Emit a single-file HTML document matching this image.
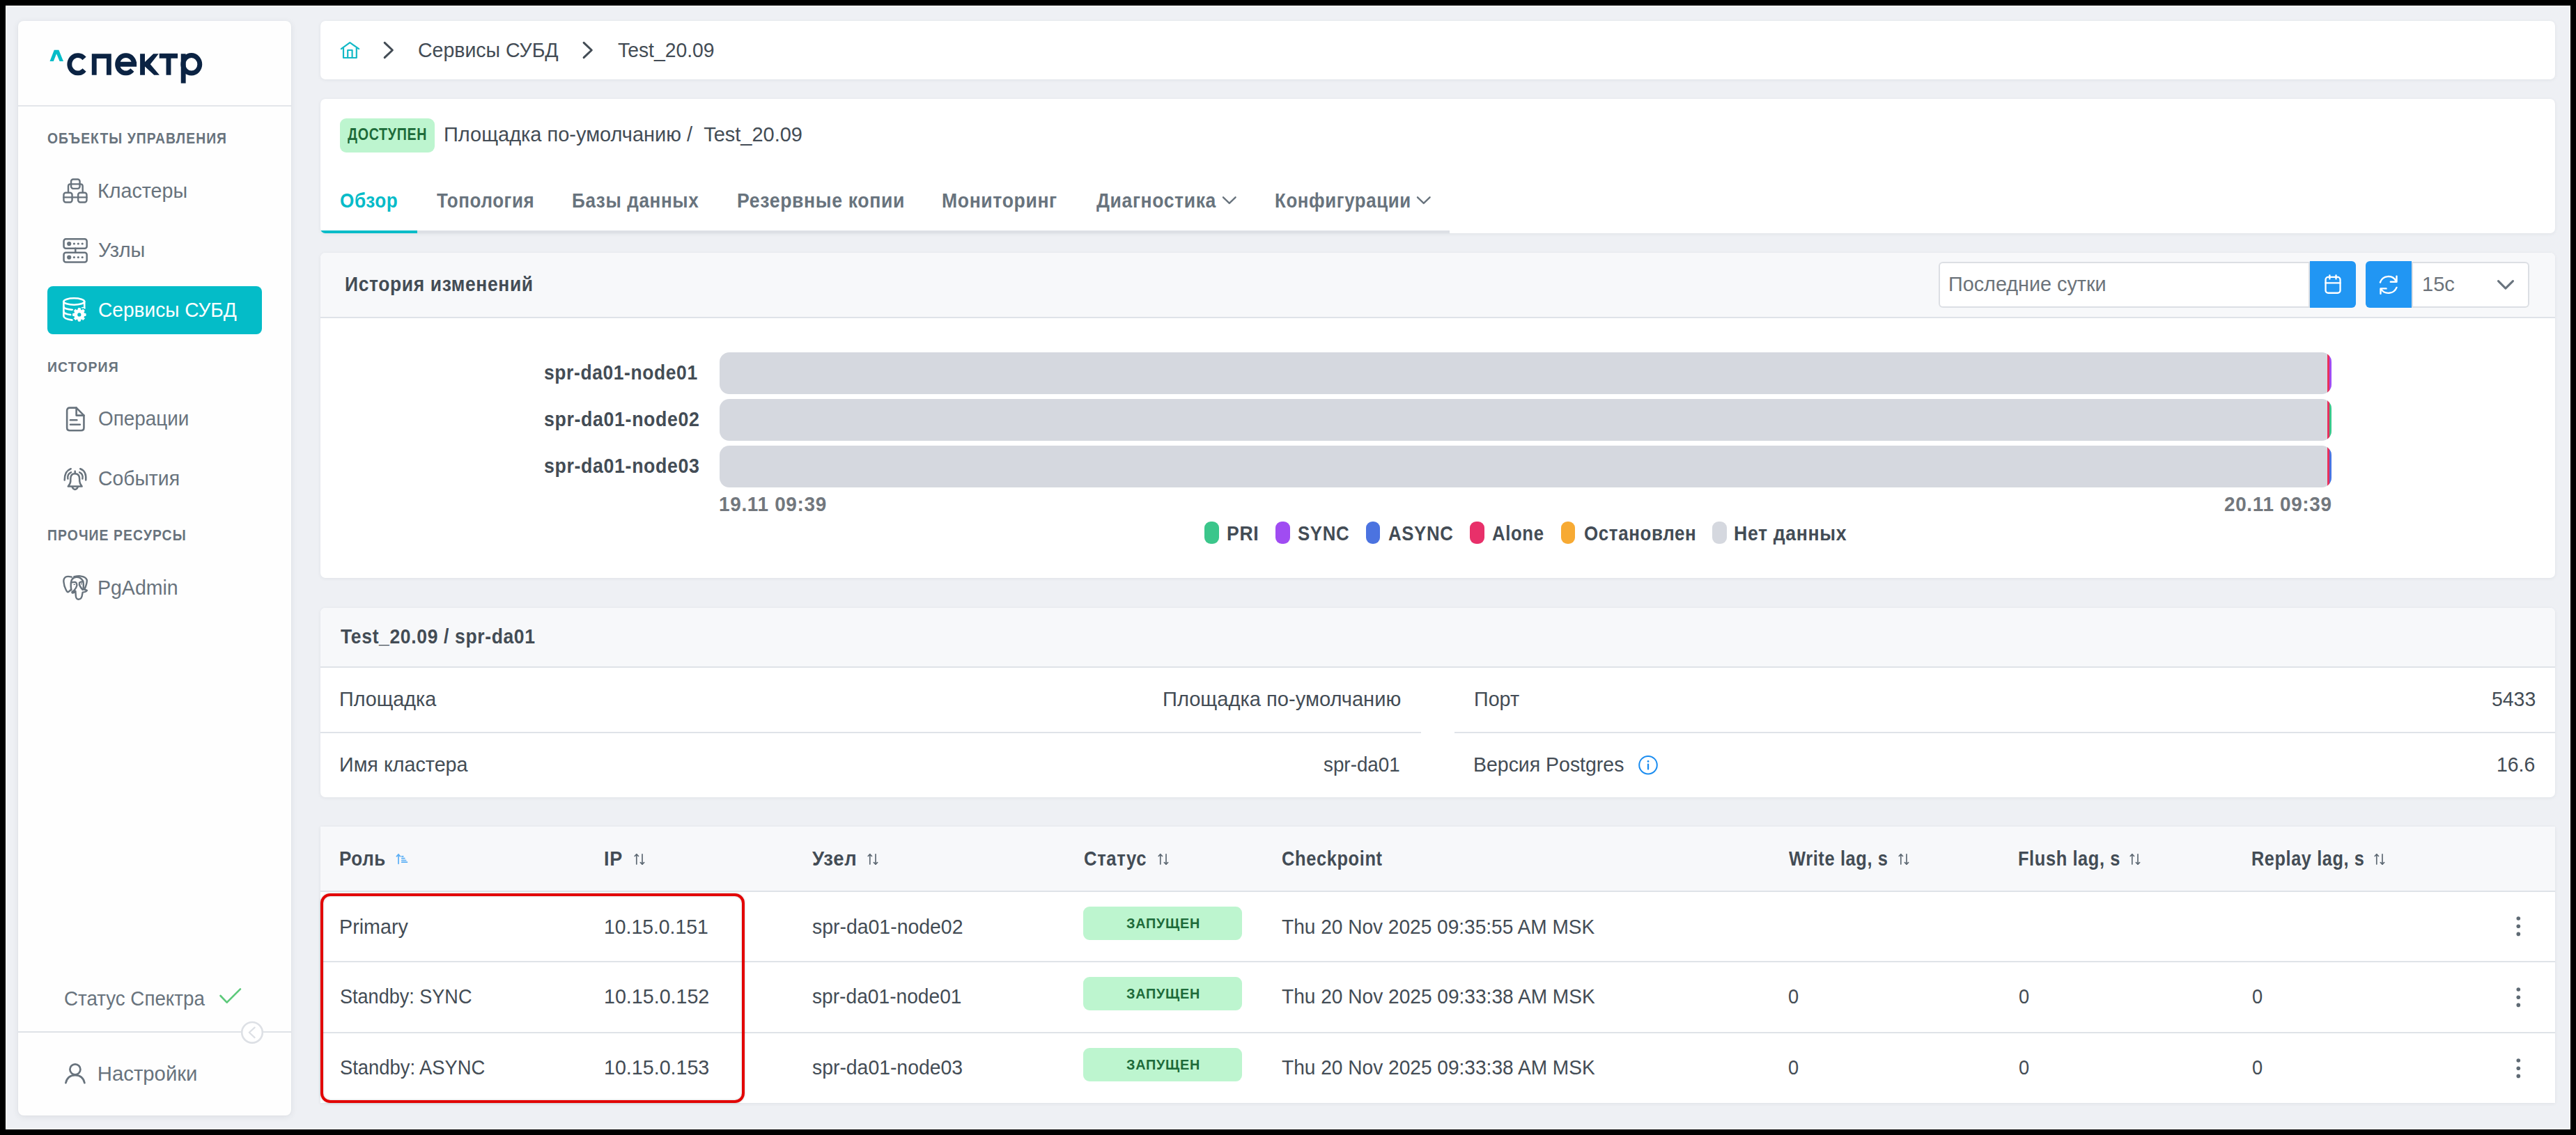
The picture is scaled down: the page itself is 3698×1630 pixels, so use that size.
<!DOCTYPE html>
<html><head><meta charset="utf-8"><title>Test_20.09</title>
<style>
html,body{margin:0;padding:0}
body{width:3698px;height:1630px;background:#000;position:relative;overflow:hidden;font-family:"Liberation Sans",sans-serif}
.a{position:absolute}
svg.a{overflow:visible}
.tx{white-space:nowrap;line-height:1;transform-origin:0 0}
</style></head><body>
<div class="a" style="left:8px;top:8px;width:3682px;height:1614px;background:#eef0f4;box-shadow:inset 0 0 0 1px #fbfcfd;"></div>
<div class="a" style="left:26px;top:30px;width:392px;height:1572px;border-radius:8px;background:#fefefe;box-shadow:0 2px 10px rgba(40,50,70,.09),0 0 2px rgba(40,50,70,.05);"></div>
<div class="a" style="left:26px;top:151px;width:392px;height:2px;background:#e3e6ea;"></div>
<svg class="a" style="left:60px;top:60px;" width="40" height="40" viewBox="0 0 40 40"><polygon fill="#04bcc8" points="17.8,11.7 24.4,11.7 31,27.9 25.6,27.9 21.1,17.3 16.8,27.9 11.5,27.9"/></svg>
<svg class="a" style="left:0;top:0" width="320" height="140" viewBox="0 0 320 140"><defs><clipPath id="lc"><rect x="90" y="76.2" width="210" height="32.3"/><rect x="255" y="90" width="15" height="29.7"/></clipPath></defs><path d="M121.04,84.10 L120.21,83.15 L119.29,82.30 L118.30,81.55 L117.24,80.91 L116.12,80.38 L114.96,79.98 L113.76,79.71 L112.55,79.57 L111.33,79.56 L110.11,79.68 L108.91,79.94 L107.75,80.32 L106.62,80.82 L105.55,81.45 L104.54,82.18 L103.62,83.03 L102.77,83.96 L102.02,84.99 L101.37,86.09 L100.83,87.25 L100.41,88.47 L100.10,89.72 L99.91,91.00 L99.85,92.30 L99.91,93.60 L100.10,94.88 L100.41,96.13 L100.83,97.35 L101.37,98.51 L102.02,99.61 L102.77,100.64 L103.62,101.57 L104.54,102.42 L105.55,103.15 L106.62,103.78 L107.75,104.28 L108.91,104.66 L110.11,104.92 L111.33,105.04 L112.55,105.03 L113.76,104.89 L114.96,104.62 L116.12,104.22 L117.24,103.69 L118.30,103.05 L119.29,102.30 L120.21,101.45 L121.04,100.50 M192.65,92.30 L192.57,90.82 L192.33,89.36 L191.93,87.94 L191.37,86.58 L190.68,85.29 L189.84,84.10 L188.88,83.03 L187.82,82.07 L186.65,81.26 L185.40,80.59 L184.09,80.09 L182.73,79.74 L181.35,79.57 L179.95,79.57 L178.57,79.74 L177.21,80.09 L175.90,80.59 L174.65,81.26 L173.48,82.07 L172.42,83.03 L171.46,84.10 L170.62,85.29 L169.93,86.58 L169.37,87.94 L168.97,89.36 L168.73,90.82 L168.65,92.30 L168.73,93.78 L168.97,95.24 L169.37,96.66 L169.93,98.02 L170.62,99.31 L171.46,100.50 L172.42,101.57 L173.48,102.53 L174.65,103.34 L175.90,104.01 L177.21,104.51 L178.57,104.86 L179.95,105.03 L181.35,105.03 L182.73,104.86 L184.09,104.51 L185.40,104.01 L186.65,103.34 L187.82,102.53 L188.88,101.57 L189.84,100.50 M168.65,92.30 H196.10 M135.25,107.7 V80.65 H156.35 V107.7 M228.7,80.25 H255.1 M242,80 V107.7 M263.2,77.2 V119.7" fill="none" stroke="#0b2343" stroke-width="6.90" stroke-linejoin="miter" clip-path="url(#lc)"/><ellipse cx="274.8" cy="92.30" rx="12.00" ry="12.75" fill="none" stroke="#0b2343" stroke-width="6.90"/><polygon fill="#0b2343" points="201.1,77.2 208,77.2 208,89 220.2,77.2 227.7,77.2 215.8,92.3 228.9,107.7 221.2,107.7 208,95.5 208,107.7 201.1,107.7"/></svg>
<div class="a" style="left:68px;top:411px;width:308px;height:69px;background:#04bcc8;border-radius:8px;"></div>
<div class="a" style="left:26px;top:1481px;width:392px;height:2px;background:#dfe2e7;"></div>
<svg class="a" style="left:340px;top:1461px;" width="44" height="44" viewBox="0 0 44 44"><circle cx="22" cy="21.8" r="14.8" fill="#fff" stroke="#dde0e5" stroke-width="2.6"/><polyline points="25.6,14.6 17.8,21.8 25.6,29.1" fill="none" stroke="#dde0e5" stroke-width="2.2" stroke-linecap="round" stroke-linejoin="round"/></svg>
<svg class="a" style="left:300px;top:1400px;" width="60" height="60" viewBox="0 0 60 60"><polyline points="16.5,30 25.7,39.7 45,20.3" fill="none" stroke="#5cc97a" stroke-width="2.6" stroke-linecap="round" stroke-linejoin="round"/></svg>
<svg class="a" style="left:84px;top:250px;" width="48" height="48" viewBox="0 0 48 48"><g fill="none" stroke="#68737d" stroke-width="2.4" stroke-linecap="round" stroke-linejoin="round"><rect x="18.05" y="7.45" width="12.5" height="13.4" rx="3"/><line x1="18" y1="14.4" x2="30.5" y2="14.4"/><path d="M18,14.4 H17 Q14,14.4 14,17.5 V25.6"/><path d="M30.5,14.4 H31.6 Q34.7,14.4 34.7,17.5 V25.6"/><rect x="7.45" y="26.75" width="12.1" height="13.7" rx="3"/><rect x="28.15" y="26.75" width="12.3" height="13.7" rx="3"/><line x1="7.45" y1="33.4" x2="40.45" y2="33.4"/></g></svg>
<svg class="a" style="left:84px;top:335px;" width="48" height="48" viewBox="0 0 48 48"><g fill="none" stroke="#68737d" stroke-width="2.5" stroke-linecap="round" stroke-linejoin="round"><rect x="7.55" y="8.25" width="33.1" height="13.5" rx="3"/><rect x="7.55" y="27.65" width="33.1" height="13.8" rx="3"/><line x1="24.3" y1="21.8" x2="24.3" y2="27.6"/></g><g fill="#68737d"><circle cx="15.2" cy="15" r="3.1"/><circle cx="22.4" cy="15" r="1.6"/><circle cx="28.3" cy="15" r="1.6"/><circle cx="34.2" cy="15" r="1.6"/><circle cx="15.2" cy="34.5" r="3.1"/><circle cx="22.4" cy="34.5" r="1.6"/><circle cx="28.3" cy="34.5" r="1.6"/><circle cx="34.2" cy="34.5" r="1.6"/></g></svg>
<svg class="a" style="left:84px;top:420px;" width="48" height="48" viewBox="0 0 48 48"><g fill="none" stroke="#fff" stroke-width="2.6" stroke-linecap="round" stroke-linejoin="round"><ellipse cx="22.3" cy="13" rx="14.9" ry="4.7"/><path d="M7.4,13 V34 Q7.4,38 19.5,39.6"/><path d="M37.2,13 V22.5"/><path d="M7.4,20.5 Q8,24 20.3,25"/><path d="M7.4,27.5 Q8,31 17.6,32"/><path d="M33,22.5 Q36,22 37.2,22.5"/></g><polygon fill="#04bcc8" points="27.94,24.95 28.33,22.62 31.27,22.62 31.66,24.95 33.40,25.66 35.33,24.30 37.40,26.37 36.04,28.30 36.75,30.04 39.08,30.43 39.08,33.37 36.75,33.76 36.04,35.50 37.40,37.43 35.33,39.50 33.40,38.14 31.66,38.85 31.27,41.18 28.33,41.18 27.94,38.85 26.20,38.14 24.27,39.50 22.20,37.43 23.56,35.50 22.85,33.76 20.52,33.37 20.52,30.43 22.85,30.04 23.56,28.30 22.20,26.37 24.27,24.30 26.20,25.66" stroke="#04bcc8" stroke-width="4" stroke-linejoin="round"/><polygon fill="#fff" points="27.94,24.95 28.33,22.62 31.27,22.62 31.66,24.95 33.40,25.66 35.33,24.30 37.40,26.37 36.04,28.30 36.75,30.04 39.08,30.43 39.08,33.37 36.75,33.76 36.04,35.50 37.40,37.43 35.33,39.50 33.40,38.14 31.66,38.85 31.27,41.18 28.33,41.18 27.94,38.85 26.20,38.14 24.27,39.50 22.20,37.43 23.56,35.50 22.85,33.76 20.52,33.37 20.52,30.43 22.85,30.04 23.56,28.30 22.20,26.37 24.27,24.30 26.20,25.66" stroke="#fff" stroke-width="1" stroke-linejoin="round"/><circle cx="29.8" cy="31.9" r="2.6" fill="#04bcc8"/></svg>
<svg class="a" style="left:84px;top:578px;" width="48" height="48" viewBox="0 0 48 48"><g fill="none" stroke="#68737d" stroke-width="2.6" stroke-linecap="round" stroke-linejoin="round"><path d="M25.6,7.65 H16.2 Q12.15,7.65 12.15,11.7 V36.2 Q12.15,40.25 16.2,40.25 H32.4 Q36.45,40.25 36.45,36.2 V18.6 Z"/><path d="M25.6,7.65 V18.6 H36.45"/><line x1="17" y1="25.2" x2="26.3" y2="25.2"/><line x1="17" y1="31.7" x2="30.8" y2="31.7"/></g></svg>
<svg class="a" style="left:84px;top:664px;" width="48" height="48" viewBox="0 0 48 48"><g fill="none" stroke="#68737d" stroke-width="2.5" stroke-linecap="round" stroke-linejoin="round"><path d="M23.7,12.8 V15.8"/><path d="M23.7,16.2 Q17.2,16.2 17.3,24 V27 Q17.2,30.5 13.8,34.6 H33.6 Q30.3,30.5 30.2,27 V24 Q30.2,16.2 23.7,16.2 Z"/><path d="M19.6,35.3 Q21.2,38.9 23.7,38.9 Q26.2,38.9 27.8,35.3"/><path d="M17.7,9.2 Q8.5,12.5 8.7,25.4"/><path d="M18,14.3 Q12.2,16.8 13.4,23.6"/><path d="M31.2,9.2 Q40.4,12.5 39.2,25.4"/><path d="M30.2,14.3 Q35.8,16.8 34.4,23.6"/></g></svg>
<svg class="a" style="left:84px;top:820px;" width="48" height="48" viewBox="0 0 48 48"><g fill="none" stroke="#68737d" stroke-width="2.4" stroke-linecap="round" stroke-linejoin="round"><path d="M18.8,8.6 Q13,7.2 10.5,8.5 Q7,10.5 7.4,15.5 Q8,22 10.5,26.5 Q12.3,30.5 13.5,30.4 Q15.5,29.5 18.3,26.4"/><path d="M18.2,27.3 Q17.5,21 17.8,17 Q18.5,9.6 25.3,8.7 Q32,8.4 35.3,14.6 Q36.3,18 35.5,26.5"/><path d="M22.3,8.2 Q29,6.8 33,7.6 Q39,8.6 40.8,13 Q41,18 37.2,26.8 Q40,27.3 40.9,28 Q39.5,30.3 34.7,30.6 L34,34 Q33.6,40.5 28.4,40.8 Q25.1,40.5 24.8,35.5 L24.4,29 Q23,31.5 19.8,31.5 Q18.5,30 21.2,28.8 L23.5,28.2"/><path d="M18.3,16.6 Q21,16 23.4,15.9 Q26.3,16.3 26.4,21 Q25.5,24.5 22.2,28"/><path d="M34.8,15.6 Q31.5,15.3 30,16.8 Q29.3,19.5 31,22 Q33.2,25.5 34.6,26.9"/></g><ellipse cx="22.8" cy="19.4" rx="1.4" ry="0.7" fill="#68737d"/><ellipse cx="33" cy="18.6" rx="1" ry="1" fill="#68737d"/></svg>
<svg class="a" style="left:84px;top:1518px;" width="48" height="48" viewBox="0 0 48 48"><g fill="none" stroke="#68737d" stroke-width="2.7" stroke-linecap="round" stroke-linejoin="round"><circle cx="23.9" cy="17.8" r="7.5"/><path d="M10.4,37.2 Q13,26.2 23.9,26.2 Q34.8,26.2 37.4,37.2"/></g></svg>
<div class="a" style="left:460px;top:30px;width:3208px;height:84px;background:#fff;border-radius:7px;box-shadow:0 1px 5px rgba(40,50,70,.07),0 0 1px rgba(40,50,70,.05);"></div>
<svg class="a" style="left:480px;top:50px;" width="40" height="44" viewBox="0 0 40 44"><g fill="none" stroke="#13b9c6" stroke-width="2.2" stroke-linecap="round" stroke-linejoin="round"><polyline points="9.9,20.2 22.3,11.2 35.1,20.2"/><polyline points="13,19 13,33 31.8,33 31.8,19"/><polyline points="19.2,33 19.2,22 25.6,22 25.6,33"/></g></svg>
<svg class="a" style="left:540px;top:50px;" width="30" height="44" viewBox="0 0 30 44"><polyline points="12.2,11.4 23.4,22 12.2,32.6" fill="none" stroke="#434c55" stroke-width="3.0" stroke-linecap="round" stroke-linejoin="round"/></svg>
<svg class="a" style="left:826px;top:50px;" width="30" height="44" viewBox="0 0 30 44"><polyline points="12.1,11.4 23.3,22 12.1,32.6" fill="none" stroke="#434c55" stroke-width="3.0" stroke-linecap="round" stroke-linejoin="round"/></svg>
<div class="a" style="left:460px;top:142px;width:3208px;height:193px;background:#fff;border-radius:7px;box-shadow:0 1px 5px rgba(40,50,70,.07),0 0 1px rgba(40,50,70,.05);overflow:hidden">
<div class="a" style="left:0;top:189px;width:1621px;height:4px;background:#dde0e5"></div>
<div class="a" style="left:0;top:189px;width:139px;height:4px;background:#04bcc8"></div>
</div>
<div class="a" style="left:488px;top:170px;width:136px;height:48.5px;background:#bdf5cf;border-radius:9px;"></div>
<svg class="a" style="left:1740px;top:270px;" width="40" height="40" viewBox="0 0 40 40"><polyline points="16,13.3 24.8,21.9 33.6,13.3" fill="none" stroke="#68737d" stroke-width="2.4" stroke-linecap="round" stroke-linejoin="round"/></svg>
<svg class="a" style="left:2018.7px;top:270px;" width="40" height="40" viewBox="0 0 40 40"><polyline points="16,13.3 24.8,21.9 33.6,13.3" fill="none" stroke="#68737d" stroke-width="2.4" stroke-linecap="round" stroke-linejoin="round"/></svg>
<div class="a" style="left:460px;top:363px;width:3208px;height:467px;background:#fff;border-radius:7px;box-shadow:0 1px 5px rgba(40,50,70,.07),0 0 1px rgba(40,50,70,.05);overflow:hidden">
<div class="a" style="left:0;top:0;width:3208px;height:92px;background:#f7f8fa;border-bottom:2px solid #dfe3e8"></div>
</div>
<div class="a" style="left:2782.5px;top:375.5px;width:533.5px;height:66.5px;box-sizing:border-box;background:#fff;border:2px solid #dcdfe4;border-radius:6px 0 0 6px;"></div>
<div class="a" style="left:3316px;top:375px;width:66px;height:67px;background:#2196f3;border-radius:0 6px 6px 0;"></div>
<div class="a" style="left:3396px;top:375px;width:66px;height:67px;background:#2196f3;border-radius:6px 0 0 6px;"></div>
<div class="a" style="left:3462px;top:375.5px;width:169px;height:66.5px;box-sizing:border-box;background:#fff;border:2px solid #dcdfe4;border-radius:0 6px 6px 0;"></div>
<svg class="a" style="left:3320px;top:380px;" width="60" height="60" viewBox="0 0 60 60"><g fill="none" stroke="#fff" stroke-width="2.3" stroke-linecap="round" stroke-linejoin="round"><rect x="18.55" y="17.95" width="21" height="22.8" rx="3.6"/><line x1="18.55" y1="26.4" x2="39.55" y2="26.4"/><line x1="24.4" y1="15.4" x2="24.4" y2="20.6"/><line x1="33.5" y1="15.4" x2="33.5" y2="20.6"/></g></svg>
<svg class="a" style="left:3400px;top:380px;" width="70" height="60" viewBox="0 0 70 60"><g fill="none" stroke="#fff" stroke-width="2.4" stroke-linecap="round" stroke-linejoin="round"><path d="M16.9,25.5 A12.4,12.4 0 0 1 39.6,23.6"/><polyline points="31.8,24.8 40.5,24.8 40.5,16.6"/><path d="M40.5,32.9 A12.8,12.8 0 0 1 18,35.2"/><polyline points="25.6,34.4 17.5,34.4 17.5,41.8"/></g></svg>
<svg class="a" style="left:3570px;top:390px;" width="50" height="40" viewBox="0 0 50 40"><polyline points="16.5,13.6 26.9,24.1 37.5,13.6" fill="none" stroke="#68737d" stroke-width="3.0" stroke-linecap="round" stroke-linejoin="round"/></svg>
<div class="a" style="left:1033px;top:506px;width:2314px;height:59.5px;border-radius:14px;overflow:hidden;background:#d5d8df"><div class="a" style="left:2308px;top:0;width:2.6px;height:60px;background:#e8305e"></div><div class="a" style="left:2310.5px;top:0;width:4.5px;height:60px;background:#a04cf2"></div></div>
<div class="a" style="left:1033px;top:573.3px;width:2314px;height:59.5px;border-radius:14px;overflow:hidden;background:#d5d8df"><div class="a" style="left:2308px;top:0;width:2.6px;height:60px;background:#e8305e"></div><div class="a" style="left:2310.5px;top:0;width:4.5px;height:60px;background:#3bc68b"></div></div>
<div class="a" style="left:1033px;top:640.3px;width:2314px;height:59.5px;border-radius:14px;overflow:hidden;background:#d5d8df"><div class="a" style="left:2308px;top:0;width:2.6px;height:60px;background:#e8305e"></div><div class="a" style="left:2310.5px;top:0;width:4.5px;height:60px;background:#4b73e0"></div></div>
<div class="a" style="left:1729px;top:749.4px;width:20.6px;height:32px;background:#3bc68b;border-radius:9px;"></div>
<div class="a" style="left:1831px;top:749.4px;width:20.6px;height:32px;background:#a04cf2;border-radius:9px;"></div>
<div class="a" style="left:1960.9px;top:749.4px;width:20.6px;height:32px;background:#4b73e0;border-radius:9px;"></div>
<div class="a" style="left:2110.3px;top:749.4px;width:20.6px;height:32px;background:#e8306a;border-radius:9px;"></div>
<div class="a" style="left:2240.8px;top:749.4px;width:20.6px;height:32px;background:#f7aa33;border-radius:9px;"></div>
<div class="a" style="left:2458.2px;top:749.4px;width:20.6px;height:32px;background:#d5d8df;border-radius:9px;"></div>
<div class="a" style="left:460px;top:873px;width:3208px;height:272px;background:#fff;border-radius:7px;box-shadow:0 1px 5px rgba(40,50,70,.07),0 0 1px rgba(40,50,70,.05);overflow:hidden">
<div class="a" style="left:0;top:0;width:3208px;height:84px;background:#f7f8fa;border-bottom:2px solid #dfe3e8"></div>
<div class="a" style="left:0;top:178px;width:1580px;height:2px;background:#dfe3e8"></div>
<div class="a" style="left:1628px;top:178px;width:1580px;height:2px;background:#dfe3e8"></div>
</div>
<svg class="a" style="left:2344px;top:1078px;" width="44" height="42" viewBox="0 0 44 42"><circle cx="22" cy="20.7" r="12.8" fill="none" stroke="#1a8cf0" stroke-width="2"/><circle cx="22" cy="15.4" r="1.4" fill="#1a8cf0"/><line x1="22" y1="19.6" x2="22" y2="26.6" stroke="#1a8cf0" stroke-width="2.3" stroke-linecap="round"/></svg>
<div class="a" style="left:460px;top:1187px;width:3208px;height:397px;background:#fff;border-radius:7px;box-shadow:0 1px 5px rgba(40,50,70,.07),0 0 1px rgba(40,50,70,.05);overflow:hidden;border-radius:0">
<div class="a" style="left:0;top:0;width:3208px;height:92px;background:#f7f8fa;border-bottom:2px solid #dfe3e8"></div>
<div class="a" style="left:0;top:193px;width:3208px;height:2px;background:#dfe3e8"></div>
<div class="a" style="left:0;top:295px;width:3208px;height:2px;background:#dfe3e8"></div>
</div>
<svg class="a" style="left:560px;top:1216px;" width="40" height="34" viewBox="0 0 40 34"><g fill="none" stroke="#5aaef5" stroke-width="1.7" stroke-linecap="round" stroke-linejoin="round"><polyline points="9.4,13.8 12,11.2 14.6,13.8"/><line x1="12" y1="11.2" x2="12" y2="24.3"/><line x1="16.8" y1="13.8" x2="18.8" y2="13.8"/><line x1="16.8" y1="16.6" x2="20.8" y2="16.6"/><line x1="16.8" y1="19.5" x2="22.6" y2="19.5"/><line x1="16.8" y1="22.2" x2="24.4" y2="22.2"/></g></svg>
<svg class="a" style="left:900px;top:1216px;" width="40" height="34" viewBox="0 0 40 34"><g fill="none" stroke="#5f6a74" stroke-width="1.7" stroke-linecap="round" stroke-linejoin="round"><polyline points="11.2,13.5 13.8,10.8 16.5,13.5"/><line x1="13.8" y1="10.8" x2="13.8" y2="25"/><polyline points="19.4,22.6 22,25.2 24.6,22.6"/><line x1="22" y1="10.8" x2="22" y2="25.2"/></g></svg>
<svg class="a" style="left:1234.5px;top:1216px;" width="40" height="34" viewBox="0 0 40 34"><g fill="none" stroke="#5f6a74" stroke-width="1.7" stroke-linecap="round" stroke-linejoin="round"><polyline points="11.2,13.5 13.8,10.8 16.5,13.5"/><line x1="13.8" y1="10.8" x2="13.8" y2="25"/><polyline points="19.4,22.6 22,25.2 24.6,22.6"/><line x1="22" y1="10.8" x2="22" y2="25.2"/></g></svg>
<svg class="a" style="left:1651.5px;top:1216px;" width="40" height="34" viewBox="0 0 40 34"><g fill="none" stroke="#5f6a74" stroke-width="1.7" stroke-linecap="round" stroke-linejoin="round"><polyline points="11.2,13.5 13.8,10.8 16.5,13.5"/><line x1="13.8" y1="10.8" x2="13.8" y2="25"/><polyline points="19.4,22.6 22,25.2 24.6,22.6"/><line x1="22" y1="10.8" x2="22" y2="25.2"/></g></svg>
<svg class="a" style="left:2714.5px;top:1216px;" width="40" height="34" viewBox="0 0 40 34"><g fill="none" stroke="#5f6a74" stroke-width="1.7" stroke-linecap="round" stroke-linejoin="round"><polyline points="11.2,13.5 13.8,10.8 16.5,13.5"/><line x1="13.8" y1="10.8" x2="13.8" y2="25"/><polyline points="19.4,22.6 22,25.2 24.6,22.6"/><line x1="22" y1="10.8" x2="22" y2="25.2"/></g></svg>
<svg class="a" style="left:3047px;top:1216px;" width="40" height="34" viewBox="0 0 40 34"><g fill="none" stroke="#5f6a74" stroke-width="1.7" stroke-linecap="round" stroke-linejoin="round"><polyline points="11.2,13.5 13.8,10.8 16.5,13.5"/><line x1="13.8" y1="10.8" x2="13.8" y2="25"/><polyline points="19.4,22.6 22,25.2 24.6,22.6"/><line x1="22" y1="10.8" x2="22" y2="25.2"/></g></svg>
<svg class="a" style="left:3398px;top:1216px;" width="40" height="34" viewBox="0 0 40 34"><g fill="none" stroke="#5f6a74" stroke-width="1.7" stroke-linecap="round" stroke-linejoin="round"><polyline points="11.2,13.5 13.8,10.8 16.5,13.5"/><line x1="13.8" y1="10.8" x2="13.8" y2="25"/><polyline points="19.4,22.6 22,25.2 24.6,22.6"/><line x1="22" y1="10.8" x2="22" y2="25.2"/></g></svg>
<div class="a" style="left:1555.2px;top:1302.3px;width:227.8px;height:47.5px;background:#bdf5cf;border-radius:9px;"></div>
<div class="a" style="left:1555.2px;top:1403.3px;width:227.8px;height:47.5px;background:#bdf5cf;border-radius:9px;"></div>
<div class="a" style="left:1555.2px;top:1505.3px;width:227.8px;height:47.5px;background:#bdf5cf;border-radius:9px;"></div>
<svg class="a" style="left:3605px;top:1311.4px;" width="20" height="40" viewBox="0 0 20 40"><circle cx="10.3" cy="8.0" r="2.8" fill="#5f6a74"/><circle cx="10.3" cy="19.2" r="2.8" fill="#5f6a74"/><circle cx="10.3" cy="30.4" r="2.8" fill="#5f6a74"/></svg>
<svg class="a" style="left:3605px;top:1413.4px;" width="20" height="40" viewBox="0 0 20 40"><circle cx="10.3" cy="8.0" r="2.8" fill="#5f6a74"/><circle cx="10.3" cy="19.2" r="2.8" fill="#5f6a74"/><circle cx="10.3" cy="30.4" r="2.8" fill="#5f6a74"/></svg>
<svg class="a" style="left:3605px;top:1515px;" width="20" height="40" viewBox="0 0 20 40"><circle cx="10.3" cy="8.0" r="2.8" fill="#5f6a74"/><circle cx="10.3" cy="19.2" r="2.8" fill="#5f6a74"/><circle cx="10.3" cy="30.4" r="2.8" fill="#5f6a74"/></svg>
<div class="a" style="left:460px;top:1283px;width:609.4px;height:301px;box-sizing:border-box;border:4.3px solid #e20404;border-radius:14px;box-shadow:0 0 3px rgba(0,0,0,.22),inset 0 0 3px rgba(0,0,0,.22);"></div>
<div class="a tx" style="left:67.82px;top:187.80px;font-size:21.88px;font-weight:700;color:#68737d;transform:scaleX(0.8834);letter-spacing:1.20px;">ОБЪЕКТЫ УПРАВЛЕНИЯ</div>
<div class="a tx" style="left:140.34px;top:259.29px;font-size:29.30px;font-weight:400;color:#68737d;transform:scaleX(0.9789);">Кластеры</div>
<div class="a tx" style="left:141.31px;top:344.00px;font-size:29.30px;font-weight:400;color:#68737d;transform:scaleX(0.9864);">Узлы</div>
<div class="a tx" style="left:140.54px;top:430.00px;font-size:29.30px;font-weight:400;color:#ffffff;transform:scaleX(0.9587);">Сервисы СУБД</div>
<div class="a tx" style="left:67.57px;top:515.94px;font-size:21.01px;font-weight:700;color:#68737d;transform:scaleX(0.9259);letter-spacing:1.20px;">ИСТОРИЯ</div>
<div class="a tx" style="left:140.55px;top:586.39px;font-size:29.30px;font-weight:400;color:#68737d;transform:scaleX(0.9515);">Операции</div>
<div class="a tx" style="left:140.53px;top:672.39px;font-size:29.30px;font-weight:400;color:#68737d;transform:scaleX(0.9678);">События</div>
<div class="a tx" style="left:67.90px;top:758.14px;font-size:21.59px;font-weight:700;color:#68737d;transform:scaleX(0.8982);letter-spacing:1.20px;">ПРОЧИЕ РЕСУРСЫ</div>
<div class="a tx" style="left:139.55px;top:829.10px;font-size:29.30px;font-weight:400;color:#68737d;transform:scaleX(0.9730);">PgAdmin</div>
<div class="a tx" style="left:92.35px;top:1419.39px;font-size:29.30px;font-weight:400;color:#68737d;transform:scaleX(0.9465);">Статус Спектра</div>
<div class="a tx" style="left:139.80px;top:1526.89px;font-size:29.30px;font-weight:400;color:#68737d;">Настройки</div>
<div class="a tx" style="left:600.03px;top:56.59px;font-size:29.30px;font-weight:400;color:#434c55;transform:scaleX(0.9723);">Сервисы СУБД</div>
<div class="a tx" style="left:887.00px;top:56.59px;font-size:29.30px;font-weight:400;color:#434c55;transform:scaleX(0.9662);">Test_20.09</div>
<div class="a tx" style="left:499.00px;top:181.81px;font-size:23.04px;font-weight:700;color:#1d6b3a;transform:scaleX(0.8538);letter-spacing:0.80px;">ДОСТУПЕН</div>
<div class="a tx" style="left:636.62px;top:178.00px;font-size:29.30px;font-weight:400;color:#434c55;transform:scaleX(0.9892);">Площадка по-умолчанию /&nbsp; Test_20.09</div>
<div class="a tx" style="left:487.81px;top:273.29px;font-size:29.30px;font-weight:700;color:#04bbc8;transform:scaleX(0.8912);letter-spacing:0.70px;">Обзор</div>
<div class="a tx" style="left:627.40px;top:273.29px;font-size:29.30px;font-weight:700;color:#68737d;transform:scaleX(0.8853);letter-spacing:0.70px;">Топология</div>
<div class="a tx" style="left:821.22px;top:273.29px;font-size:29.30px;font-weight:700;color:#68737d;transform:scaleX(0.8911);letter-spacing:0.70px;">Базы данных</div>
<div class="a tx" style="left:1057.88px;top:273.29px;font-size:29.30px;font-weight:700;color:#68737d;transform:scaleX(0.9092);letter-spacing:0.70px;">Резервные копии</div>
<div class="a tx" style="left:1352.18px;top:273.29px;font-size:29.30px;font-weight:700;color:#68737d;transform:scaleX(0.9078);letter-spacing:0.70px;">Мониторинг</div>
<div class="a tx" style="left:1573.70px;top:273.29px;font-size:29.30px;font-weight:700;color:#68737d;transform:scaleX(0.9058);letter-spacing:0.70px;">Диагностика</div>
<div class="a tx" style="left:1830.23px;top:273.29px;font-size:29.30px;font-weight:700;color:#68737d;transform:scaleX(0.8826);letter-spacing:0.70px;">Конфигурации</div>
<div class="a tx" style="left:494.59px;top:393.20px;font-size:29.30px;font-weight:700;color:#434c55;transform:scaleX(0.9031);letter-spacing:0.70px;">История изменений</div>
<div class="a tx" style="left:2797.04px;top:393.39px;font-size:29.30px;font-weight:400;color:#6c737a;transform:scaleX(0.9824);">Последние сутки</div>
<div class="a tx" style="left:3477.02px;top:393.39px;font-size:29.30px;font-weight:400;color:#6c737a;transform:scaleX(0.9911);">15с</div>
<div class="a tx" style="left:780.60px;top:520.30px;font-size:29.30px;font-weight:700;color:#434c55;transform:scaleX(0.9012);letter-spacing:0.70px;">spr-da01-node01</div>
<div class="a tx" style="left:780.59px;top:587.30px;font-size:29.30px;font-weight:700;color:#434c55;transform:scaleX(0.9128);letter-spacing:0.70px;">spr-da01-node02</div>
<div class="a tx" style="left:780.59px;top:654.39px;font-size:29.30px;font-weight:700;color:#434c55;transform:scaleX(0.9128);letter-spacing:0.70px;">spr-da01-node03</div>
<div class="a tx" style="left:1032.49px;top:709.39px;font-size:29.30px;font-weight:700;color:#72777d;transform:scaleX(0.9535);letter-spacing:0.70px;">19.11 09:39</div>
<div class="a tx" style="left:3192.55px;top:709.39px;font-size:29.30px;font-weight:700;color:#72777d;transform:scaleX(0.9519);letter-spacing:0.70px;">20.11 09:39</div>
<div class="a tx" style="left:1761.08px;top:750.50px;font-size:29.30px;font-weight:700;color:#434c55;transform:scaleX(0.9085);letter-spacing:0.70px;">PRI</div>
<div class="a tx" style="left:1862.92px;top:750.50px;font-size:29.30px;font-weight:700;color:#434c55;transform:scaleX(0.8805);letter-spacing:0.70px;">SYNC</div>
<div class="a tx" style="left:1993.02px;top:750.50px;font-size:29.30px;font-weight:700;color:#434c55;transform:scaleX(0.8808);letter-spacing:0.70px;">ASYNC</div>
<div class="a tx" style="left:2142.42px;top:750.50px;font-size:29.30px;font-weight:700;color:#434c55;transform:scaleX(0.8795);letter-spacing:0.70px;">Alone</div>
<div class="a tx" style="left:2273.61px;top:750.50px;font-size:29.30px;font-weight:700;color:#434c55;transform:scaleX(0.8855);letter-spacing:0.70px;">Остановлен</div>
<div class="a tx" style="left:2489.18px;top:750.50px;font-size:29.30px;font-weight:700;color:#434c55;transform:scaleX(0.9103);letter-spacing:0.70px;">Нет данных</div>
<div class="a tx" style="left:489.20px;top:899.39px;font-size:29.30px;font-weight:700;color:#434c55;transform:scaleX(0.9052);letter-spacing:0.70px;">Test_20.09 / spr-da01</div>
<div class="a tx" style="left:487.24px;top:989.30px;font-size:29.30px;font-weight:400;color:#434c55;transform:scaleX(0.9807);">Площадка</div>
<div class="a tx" style="left:1669.21px;top:989.30px;font-size:29.30px;font-weight:400;color:#434c55;transform:scaleX(0.9927);">Площадка по-умолчанию</div>
<div class="a tx" style="left:2115.54px;top:989.30px;font-size:29.30px;font-weight:400;color:#434c55;transform:scaleX(0.9797);">Порт</div>
<div class="a tx" style="left:3576.53px;top:989.30px;font-size:29.30px;font-weight:400;color:#434c55;transform:scaleX(0.9698);">5433</div>
<div class="a tx" style="left:487.24px;top:1083.30px;font-size:29.30px;font-weight:400;color:#434c55;transform:scaleX(0.9797);">Имя кластера</div>
<div class="a tx" style="left:1900.05px;top:1083.30px;font-size:29.30px;font-weight:400;color:#434c55;transform:scaleX(0.9491);">spr-da01</div>
<div class="a tx" style="left:2115.36px;top:1083.30px;font-size:29.30px;font-weight:400;color:#434c55;transform:scaleX(0.9714);">Версия Postgres</div>
<div class="a tx" style="left:3584.36px;top:1083.30px;font-size:29.30px;font-weight:400;color:#434c55;transform:scaleX(0.9685);">16.6</div>
<div class="a tx" style="left:487.23px;top:1217.80px;font-size:29.30px;font-weight:700;color:#434c55;transform:scaleX(0.8875);letter-spacing:0.70px;">Роль</div>
<div class="a tx" style="left:867.15px;top:1217.80px;font-size:29.30px;font-weight:700;color:#434c55;transform:scaleX(0.9231);letter-spacing:0.70px;">IP</div>
<div class="a tx" style="left:1166.20px;top:1217.80px;font-size:29.30px;font-weight:700;color:#434c55;transform:scaleX(0.9364);letter-spacing:0.70px;">Узел</div>
<div class="a tx" style="left:1555.72px;top:1217.80px;font-size:29.30px;font-weight:700;color:#434c55;transform:scaleX(0.8752);letter-spacing:0.70px;">Статус</div>
<div class="a tx" style="left:1839.83px;top:1217.80px;font-size:29.30px;font-weight:700;color:#434c55;transform:scaleX(0.8685);letter-spacing:0.70px;">Checkpoint</div>
<div class="a tx" style="left:2567.90px;top:1217.80px;font-size:29.30px;font-weight:700;color:#434c55;transform:scaleX(0.8687);letter-spacing:0.70px;">Write lag, s</div>
<div class="a tx" style="left:2896.97px;top:1217.80px;font-size:29.30px;font-weight:700;color:#434c55;transform:scaleX(0.8669);letter-spacing:0.70px;">Flush lag, s</div>
<div class="a tx" style="left:3231.87px;top:1217.80px;font-size:29.30px;font-weight:700;color:#434c55;transform:scaleX(0.8627);letter-spacing:0.70px;">Replay lag, s</div>
<div class="a tx" style="left:487.04px;top:1315.60px;font-size:29.30px;font-weight:400;color:#434c55;transform:scaleX(0.9788);">Primary</div>
<div class="a tx" style="left:867.07px;top:1315.60px;font-size:29.30px;font-weight:400;color:#434c55;transform:scaleX(0.9671);">10.15.0.151</div>
<div class="a tx" style="left:1165.63px;top:1315.60px;font-size:29.30px;font-weight:400;color:#434c55;transform:scaleX(0.9701);">spr-da01-node02</div>
<div class="a tx" style="left:1840.30px;top:1315.60px;font-size:29.30px;font-weight:400;color:#434c55;transform:scaleX(0.9578);">Thu 20 Nov 2025 09:35:55 AM MSK</div>
<div class="a tx" style="left:488.08px;top:1416.39px;font-size:29.30px;font-weight:400;color:#434c55;transform:scaleX(0.9232);">Standby: SYNC</div>
<div class="a tx" style="left:867.04px;top:1416.39px;font-size:29.30px;font-weight:400;color:#434c55;transform:scaleX(0.9776);">10.15.0.152</div>
<div class="a tx" style="left:1165.64px;top:1416.39px;font-size:29.30px;font-weight:400;color:#434c55;transform:scaleX(0.9611);">spr-da01-node01</div>
<div class="a tx" style="left:1840.30px;top:1416.39px;font-size:29.30px;font-weight:400;color:#434c55;transform:scaleX(0.9588);">Thu 20 Nov 2025 09:33:38 AM MSK</div>
<div class="a tx" style="left:2566.97px;top:1416.39px;font-size:29.30px;font-weight:400;color:#434c55;transform:scaleX(0.9300);">0</div>
<div class="a tx" style="left:2897.77px;top:1416.39px;font-size:29.30px;font-weight:400;color:#434c55;transform:scaleX(0.9300);">0</div>
<div class="a tx" style="left:3232.67px;top:1416.39px;font-size:29.30px;font-weight:400;color:#434c55;transform:scaleX(0.9300);">0</div>
<div class="a tx" style="left:488.07px;top:1518.10px;font-size:29.30px;font-weight:400;color:#434c55;transform:scaleX(0.9339);">Standby: ASYNC</div>
<div class="a tx" style="left:867.04px;top:1518.10px;font-size:29.30px;font-weight:400;color:#434c55;transform:scaleX(0.9776);">10.15.0.153</div>
<div class="a tx" style="left:1165.63px;top:1518.10px;font-size:29.30px;font-weight:400;color:#434c55;transform:scaleX(0.9679);">spr-da01-node03</div>
<div class="a tx" style="left:1840.30px;top:1518.10px;font-size:29.30px;font-weight:400;color:#434c55;transform:scaleX(0.9588);">Thu 20 Nov 2025 09:33:38 AM MSK</div>
<div class="a tx" style="left:2566.97px;top:1518.10px;font-size:29.30px;font-weight:400;color:#434c55;transform:scaleX(0.9300);">0</div>
<div class="a tx" style="left:2897.77px;top:1518.10px;font-size:29.30px;font-weight:400;color:#434c55;transform:scaleX(0.9300);">0</div>
<div class="a tx" style="left:3232.67px;top:1518.10px;font-size:29.30px;font-weight:400;color:#434c55;transform:scaleX(0.9300);">0</div>
<div class="a tx" style="left:1617.00px;top:1316.18px;font-size:20.72px;font-weight:700;color:#1d6b3a;transform:scaleX(0.9560);letter-spacing:0.80px;">ЗАПУЩЕН</div>
<div class="a tx" style="left:1617.00px;top:1417.18px;font-size:20.72px;font-weight:700;color:#1d6b3a;transform:scaleX(0.9560);letter-spacing:0.80px;">ЗАПУЩЕН</div>
<div class="a tx" style="left:1617.00px;top:1519.18px;font-size:20.72px;font-weight:700;color:#1d6b3a;transform:scaleX(0.9560);letter-spacing:0.80px;">ЗАПУЩЕН</div>
</body></html>
